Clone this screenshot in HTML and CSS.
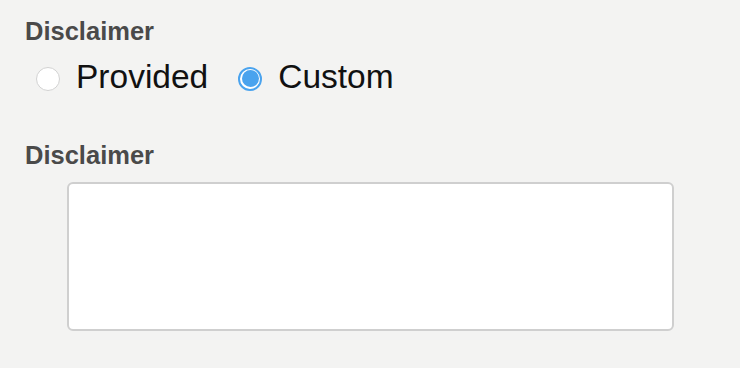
FILE: index.html
```html
<!DOCTYPE html>
<html>
<head>
<meta charset="utf-8">
<link rel="stylesheet" href="styles.css">
</head>
<body>
<div class="form">
  <div class="field-label">Disclaimer</div>
  <div class="radio-row">
    <label class="option"><span class="radio"></span><span class="option-text">Provided</span></label>
    <label class="option"><span class="radio checked"></span><span class="option-text">Custom</span></label>
  </div>
  <div class="field-label second">Disclaimer</div>
  <div class="textarea"></div>
</div>
</body>
</html>
```
FILE: styles.css
```css
html, body {
  margin: 0;
  padding: 0;
  background: #f3f3f2;
}
body {
  width: 740px;
  height: 368px;
  overflow: hidden;
  font-family: "Liberation Sans", Arial, sans-serif;
}
.form {
  padding: 16px 0 0 25px;
  display: flex;
  flex-direction: column;
  align-items: flex-start;
}
.field-label {
  font-size: 25.5px;
  line-height: 30px;
  font-weight: bold;
  color: #4a4a4a;
}
.field-label.second {
  margin-top: 43px;
}
.radio-row {
  display: flex;
  align-items: center;
  height: 40px;
  margin-top: 11px;
  padding-left: 11px;
}
.option {
  display: flex;
  align-items: center;
  margin-right: 30px;
}
.radio {
  box-sizing: border-box;
  width: 24px;
  height: 24px;
  border-radius: 50%;
  border: 1.5px solid #d2d2d2;
  background: #fff;
  margin-right: 16px;
  margin-top: 4px;
}
.radio.checked {
  border: 2px solid #4aa3ee;
  background: #fff;
  position: relative;
}
.radio.checked::after {
  content: "";
  position: absolute;
  left: 1.5px;
  top: 1px;
  width: 17px;
  height: 17px;
  border-radius: 50%;
  background: #4aa3ee;
}
.option-text {
  font-size: 33.5px;
  line-height: 40px;
  color: #111;
}
.textarea {
  box-sizing: border-box;
  margin-top: 12px;
  margin-left: 42px;
  width: 607px;
  height: 149px;
  background: #fff;
  border: 2px solid #cfcfcf;
  border-radius: 6px;
}
```
